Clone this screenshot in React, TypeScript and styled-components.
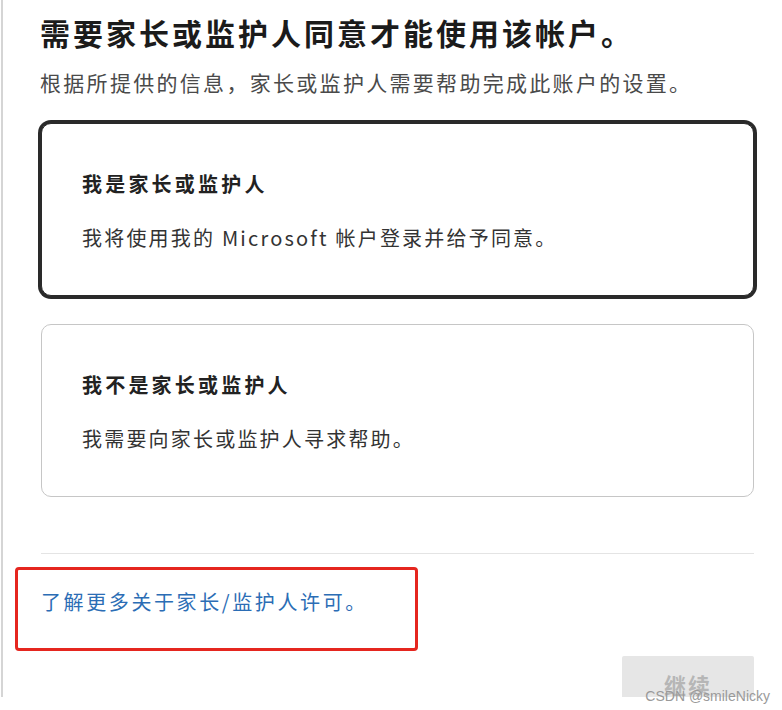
import React from 'react';
import styled, { createGlobalStyle } from 'styled-components';

const GlobalStyle = createGlobalStyle`
  html, body {
    margin: 0;
    padding: 0;
    background: #ffffff;
  }
  body {
    font-family: "Noto Sans CJK SC", "Noto Sans", sans-serif;
  }
`;

interface Option {
  title: string;
  desc: string;
  selected?: boolean;
}

const options: Option[] = [
  { title: '我是家长或监护人', desc: '我将使用我的 Microsoft 帐户登录并给予同意。', selected: true },
  { title: '我不是家长或监护人', desc: '我需要向家长或监护人寻求帮助。' },
];

const App: React.FunctionComponent = () => {
  return (
    <>
      <GlobalStyle />
      <Frame>
        <Page>
          <Title>需要家长或监护人同意才能使用该帐户。</Title>
          <Subtitle>根据所提供的信息，家长或监护人需要帮助完成此账户的设置。</Subtitle>

          <OptionList>
            {options.map((o) => (
              <Card key={o.title} selected={o.selected}>
                <CardTitle>{o.title}</CardTitle>
                <CardDesc>{o.desc}</CardDesc>
              </Card>
            ))}
          </OptionList>

          <Divider />

          <Highlight>
            <LearnMore href="#">了解更多关于家长/监护人许可。</LearnMore>
          </Highlight>

          <Footer>
            <NextButton disabled>继续</NextButton>
          </Footer>
        </Page>

        <Watermark>CSDN @smileNicky</Watermark>
      </Frame>
    </>
  );
};

const Frame = styled.div`
  position: relative;
  width: 782px;
  height: 710px;
  background: #fff;
`;

const Page = styled.div`
  box-sizing: border-box;
  width: 779px;
  height: 697px;
  margin-left: 1px;
  padding: 12px 26px 0 38px;
  border-left: 2px solid #d5d5d5;
  overflow: hidden;
  background: #fff;
`;

const Title = styled.h1`
  margin: 0 0 0 -1px;
  font-size: 30px;
  line-height: 40px;
  font-weight: 700;
  letter-spacing: 3px;
  color: #1b1b1b;
`;

const Subtitle = styled.p`
  margin: 15px 0 0 -1px;
  font-size: 21px;
  line-height: 30px;
  letter-spacing: 2.3px;
  color: #4a4a4a;
`;

const OptionList = styled.div`
  display: flex;
  flex-direction: column;
  gap: 28px;
  margin-top: 26px;
`;

const Card = styled.div<{ selected?: boolean }>`
  box-sizing: border-box;
  height: 173px;
  padding: 46px 40px 0 40px;
  border-radius: 10px;
  border: 1.5px solid ${({ selected }) => (selected ? '#2a2a2a' : '#c6c6c6')};
  box-shadow: ${({ selected }) => (selected ? '0 0 0 3px #2a2a2a' : 'none')};
  background: #fff;
`;

const CardTitle = styled.div`
  font-size: 20px;
  line-height: 28px;
  font-weight: 700;
  letter-spacing: 3.2px;
  color: #222;
`;

const CardDesc = styled.div`
  margin-top: 26px;
  font-size: 20px;
  line-height: 28px;
  letter-spacing: 2.2px;
  color: #333;
`;

const Divider = styled.hr`
  margin: 56px 0 0 0;
  border: none;
  border-top: 1px solid #e4e4e4;
`;

const Highlight = styled.div`
  box-sizing: border-box;
  width: 403px;
  height: 84px;
  margin: 13px 0 0 -26px;
  padding: 18px 0 0 23px;
  border: 3px solid #e5261f;
  border-radius: 4px;
`;

const LearnMore = styled.a`
  font-size: 20px;
  line-height: 28px;
  letter-spacing: 2.6px;
  color: #2b6db5;
  text-decoration: none;
`;

const Footer = styled.div`
  display: flex;
  justify-content: flex-end;
  margin-top: 5px;
`;

const NextButton = styled.button`
  width: 132px;
  height: 48px;
  border: none;
  border-radius: 2px;
  background: #e6e6e6;
  color: #b6b6b6;
  font-family: inherit;
  font-size: 22px;
  font-weight: 700;
  letter-spacing: 2px;
  padding-top: 8px;
`;

const Watermark = styled.div`
  position: absolute;
  top: 688px;
  right: 12px;
  font-family: "Liberation Sans", Arial, sans-serif;
  font-size: 14px;
  line-height: 16px;
  color: #9a9a9a;
`;

export default App;
